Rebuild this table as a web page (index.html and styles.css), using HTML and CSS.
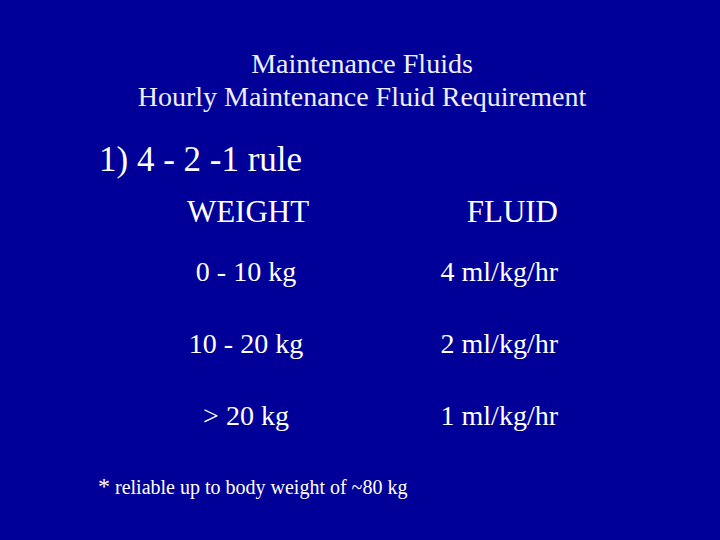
FILE: index.html
```html
<!DOCTYPE html>
<html>
<head>
<meta charset="utf-8">
<link rel="stylesheet" href="styles.css">
</head>
<body>
<div class="slide">
  <div class="title">
    <div>Maintenance Fluids</div>
    <div>Hourly Maintenance Fluid Requirement</div>
  </div>
  <div class="rule">1) 4 - 2 -1 rule</div>
  <div class="table">
    <div class="head c1">WEIGHT</div>
    <div class="head c2">FLUID</div>
    <div class="cell c1">0 - 10 kg</div>
    <div class="cell c2">4 ml/kg/hr</div>
    <div class="cell c1">10 - 20 kg</div>
    <div class="cell c2">2 ml/kg/hr</div>
    <div class="cell c1">&gt; 20 kg</div>
    <div class="cell c2">1 ml/kg/hr</div>
  </div>
  <div class="note"><span class="star">*</span> reliable up to body weight of ~80 kg</div>
</div>
</body>
</html>
```
FILE: styles.css
```css
html, body {
  margin: 0;
  padding: 0;
  background: #000099;
}
.slide {
  width: 720px;
  height: 540px;
  background: #000099;
  color: #ffffff;
  font-family: "Liberation Serif", "Times New Roman", serif;
  box-sizing: border-box;
  padding-top: 47px;
  display: flex;
  flex-direction: column;
}
.title {
  font-size: 28px;
  line-height: 33px;
  text-align: center;
  padding-left: 4px;
  color: #eeeeff;
}
.rule {
  font-size: 35px;
  line-height: 40px;
  margin-top: 27px;
  padding-left: 99px;
}
.table {
  display: grid;
  grid-template-columns: 248px 188px;
  padding-left: 122px;
}
.head {
  font-size: 31px;
  line-height: 36px;
  margin-top: 14px;
  margin-bottom: 6px;
}
.head.c1 {
  padding-left: 4px;
}
.cell {
  font-size: 28px;
  line-height: 72px;
}
.c1 {
  text-align: center;
}
.c2 {
  text-align: right;
}
.note {
  font-size: 20px;
  line-height: 30px;
  padding-left: 98px;
  margin-top: 19px;
}
.star {
  font-size: 24px;
}
```
